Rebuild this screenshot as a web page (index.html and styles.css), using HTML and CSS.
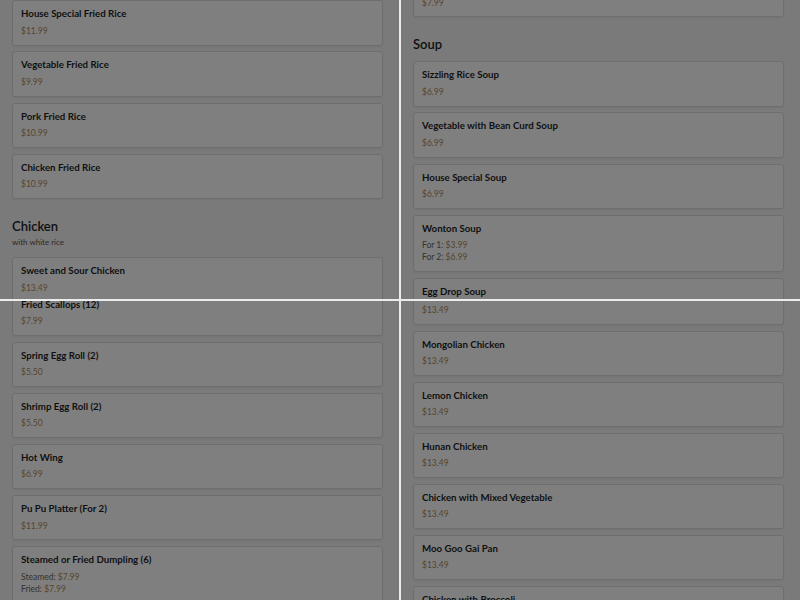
FILE: index.html
```html
<!DOCTYPE html>
<html lang="en">
<head>
    <meta charset="UTF-8">
    <meta name="viewport" content="width=device-width, initial-scale=1.0">
    <title>Menu</title>
    <link rel="stylesheet" href="styles.css">
</head>
<body>
    <div class="board">
        <!-- fried rice / chicken -->
        <div class="tile">
            <div class="menu menu--fried-rice">
                <section class="section">
                    <div class="item-list">
                        <div class="item">
                            <h3 class="item-name">House Special Fried Rice</h3>
                            <div class="item-prices"><span class="price">$11.99</span></div>
                        </div>
                        <div class="item">
                            <h3 class="item-name">Vegetable Fried Rice</h3>
                            <div class="item-prices"><span class="price">$9.99</span></div>
                        </div>
                        <div class="item">
                            <h3 class="item-name">Pork Fried Rice</h3>
                            <div class="item-prices"><span class="price">$10.99</span></div>
                        </div>
                        <div class="item">
                            <h3 class="item-name">Chicken Fried Rice</h3>
                            <div class="item-prices"><span class="price">$10.99</span></div>
                        </div>
                    </div>
                </section>
                <section class="section">
                    <div class="section-head">
                        <h2 class="section-title">Chicken</h2>
                        <p class="section-note">with white rice</p>
                    </div>
                    <div class="item-list">
                        <div class="item">
                            <h3 class="item-name">Sweet and Sour Chicken</h3>
                            <div class="item-prices"><span class="price">$13.49</span></div>
                        </div>
                    </div>
                </section>
            </div>
        </div>

        <!-- soup -->
        <div class="tile">
            <div class="menu menu--soup">
                <section class="section">
                    <div class="item-list">
                        <div class="item item--partial">
                            <div class="item-prices"><span class="price">$7.99</span></div>
                        </div>
                    </div>
                </section>
                <section class="section">
                    <div class="section-head">
                        <h2 class="section-title">Soup</h2>
                    </div>
                    <div class="item-list">
                        <div class="item">
                            <h3 class="item-name">Sizzling Rice Soup</h3>
                            <div class="item-prices"><span class="price">$6.99</span></div>
                        </div>
                        <div class="item">
                            <h3 class="item-name">Vegetable with Bean Curd Soup</h3>
                            <div class="item-prices"><span class="price">$6.99</span></div>
                        </div>
                        <div class="item">
                            <h3 class="item-name">House Special Soup</h3>
                            <div class="item-prices"><span class="price">$6.99</span></div>
                        </div>
                        <div class="item">
                            <h3 class="item-name">Wonton Soup</h3>
                            <div class="item-prices">
                                <div><span class="price-label">For 1:</span> <span class="price">$3.99</span></div>
                                <div><span class="price-label">For 2:</span> <span class="price">$6.99</span></div>
                            </div>
                        </div>
                        <div class="item item--last">
                            <h3 class="item-name">Egg Drop Soup</h3>
                        </div>
                    </div>
                </section>
            </div>
        </div>

        <!-- appetizers -->
        <div class="tile">
            <div class="menu menu--appetizers">
                <section class="section">
                    <div class="item-list">
                        <div class="item">
                            <h3 class="item-name">Fried Scallops (12)</h3>
                            <div class="item-prices"><span class="price">$7.99</span></div>
                        </div>
                        <div class="item">
                            <h3 class="item-name">Spring Egg Roll (2)</h3>
                            <div class="item-prices"><span class="price">$5.50</span></div>
                        </div>
                        <div class="item">
                            <h3 class="item-name">Shrimp Egg Roll (2)</h3>
                            <div class="item-prices"><span class="price">$5.50</span></div>
                        </div>
                        <div class="item">
                            <h3 class="item-name">Hot Wing</h3>
                            <div class="item-prices"><span class="price">$6.99</span></div>
                        </div>
                        <div class="item">
                            <h3 class="item-name">Pu Pu Platter (For 2)</h3>
                            <div class="item-prices"><span class="price">$11.99</span></div>
                        </div>
                        <div class="item">
                            <h3 class="item-name">Steamed or Fried Dumpling (6)</h3>
                            <div class="item-prices">
                                <div><span class="price-label">Steamed:</span> <span class="price">$7.99</span></div>
                                <div><span class="price-label">Fried:</span> <span class="price">$7.99</span></div>
                            </div>
                        </div>
                    </div>
                </section>
            </div>
        </div>

        <!-- chicken, further down -->
        <div class="tile">
            <div class="menu menu--chicken">
                <section class="section">
                    <div class="item-list">
                        <div class="item item--partial">
                            <div class="item-prices"><span class="price">$13.49</span></div>
                        </div>
                        <div class="item">
                            <h3 class="item-name">Mongolian Chicken</h3>
                            <div class="item-prices"><span class="price">$13.49</span></div>
                        </div>
                        <div class="item">
                            <h3 class="item-name">Lemon Chicken</h3>
                            <div class="item-prices"><span class="price">$13.49</span></div>
                        </div>
                        <div class="item">
                            <h3 class="item-name">Hunan Chicken</h3>
                            <div class="item-prices"><span class="price">$13.49</span></div>
                        </div>
                        <div class="item">
                            <h3 class="item-name">Chicken with Mixed Vegetable</h3>
                            <div class="item-prices"><span class="price">$13.49</span></div>
                        </div>
                        <div class="item">
                            <h3 class="item-name">Moo Goo Gai Pan</h3>
                            <div class="item-prices"><span class="price">$13.49</span></div>
                        </div>
                        <div class="item item--last">
                            <h3 class="item-name">Chicken with Broccoli</h3>
                        </div>
                    </div>
                </section>
            </div>
        </div>
    </div>
</body>
</html>
```

FILE: styles.css
```css
html, body {
    margin: 0;
    height: 100%;
}
body {
    font-family: "Lato", "Open Sans", sans-serif;
    color: #222;
    background: #ececec;
}
.board {
    display: grid;
    grid-template-columns: 399px 399px;
    grid-template-rows: 299px 299px;
    gap: 2px;
}
.tile {
    position: relative;
    overflow: hidden;
    background: #f4f4f4;
    padding: 0 16px 0 12px;
}
/* dimmed backdrop on top of the page */
.tile::after {
    content: "";
    position: absolute;
    inset: 0;
    background: rgba(0, 0, 0, 0.5);
}
.menu {
    display: flex;
    flex-direction: column;
    gap: 18.7px;
}
.menu--fried-rice {
    margin-top: 0.4px;
}
.menu--soup {
    margin-top: -28px;
}
.menu--appetizers {
    margin-top: -10.3px;
}
.menu--chicken {
    margin-top: -21.5px;
}
.section {
    display: flex;
    flex-direction: column;
    gap: 9.4px;
}
.section-title {
    margin: 0;
    font-size: 13px;
    font-weight: 600;
    line-height: 16px;
    color: #1e1e1e;
}
.section-note {
    margin: 3.4px 0 0;
    font-size: 8px;
    line-height: 11px;
    color: #555;
}
.item-list {
    display: flex;
    flex-direction: column;
    gap: 5.8px;
}
.item {
    background: #fff;
    border: 1px solid #dcdcdc;
    border-radius: 3px;
    padding: 5px 8px 7.8px;
    box-shadow: 0 1px 2px rgba(0, 0, 0, 0.05);
}
/* card scrolled past: only its price still shows */
.item--partial {
    padding-top: 20px;
}
/* card running off the bottom */
.item--last {
    height: 45px;
    box-sizing: border-box;
}
.item-name {
    margin: 0;
    font-size: 9.7px;
    font-weight: 700;
    line-height: 15px;
    color: #1f1f1f;
}
.item-prices {
    margin-top: 3.5px;
    font-size: 8.5px;
    line-height: 12px;
}
.price {
    color: #b08a58;
}
.price-label {
    color: #666;
}
```
